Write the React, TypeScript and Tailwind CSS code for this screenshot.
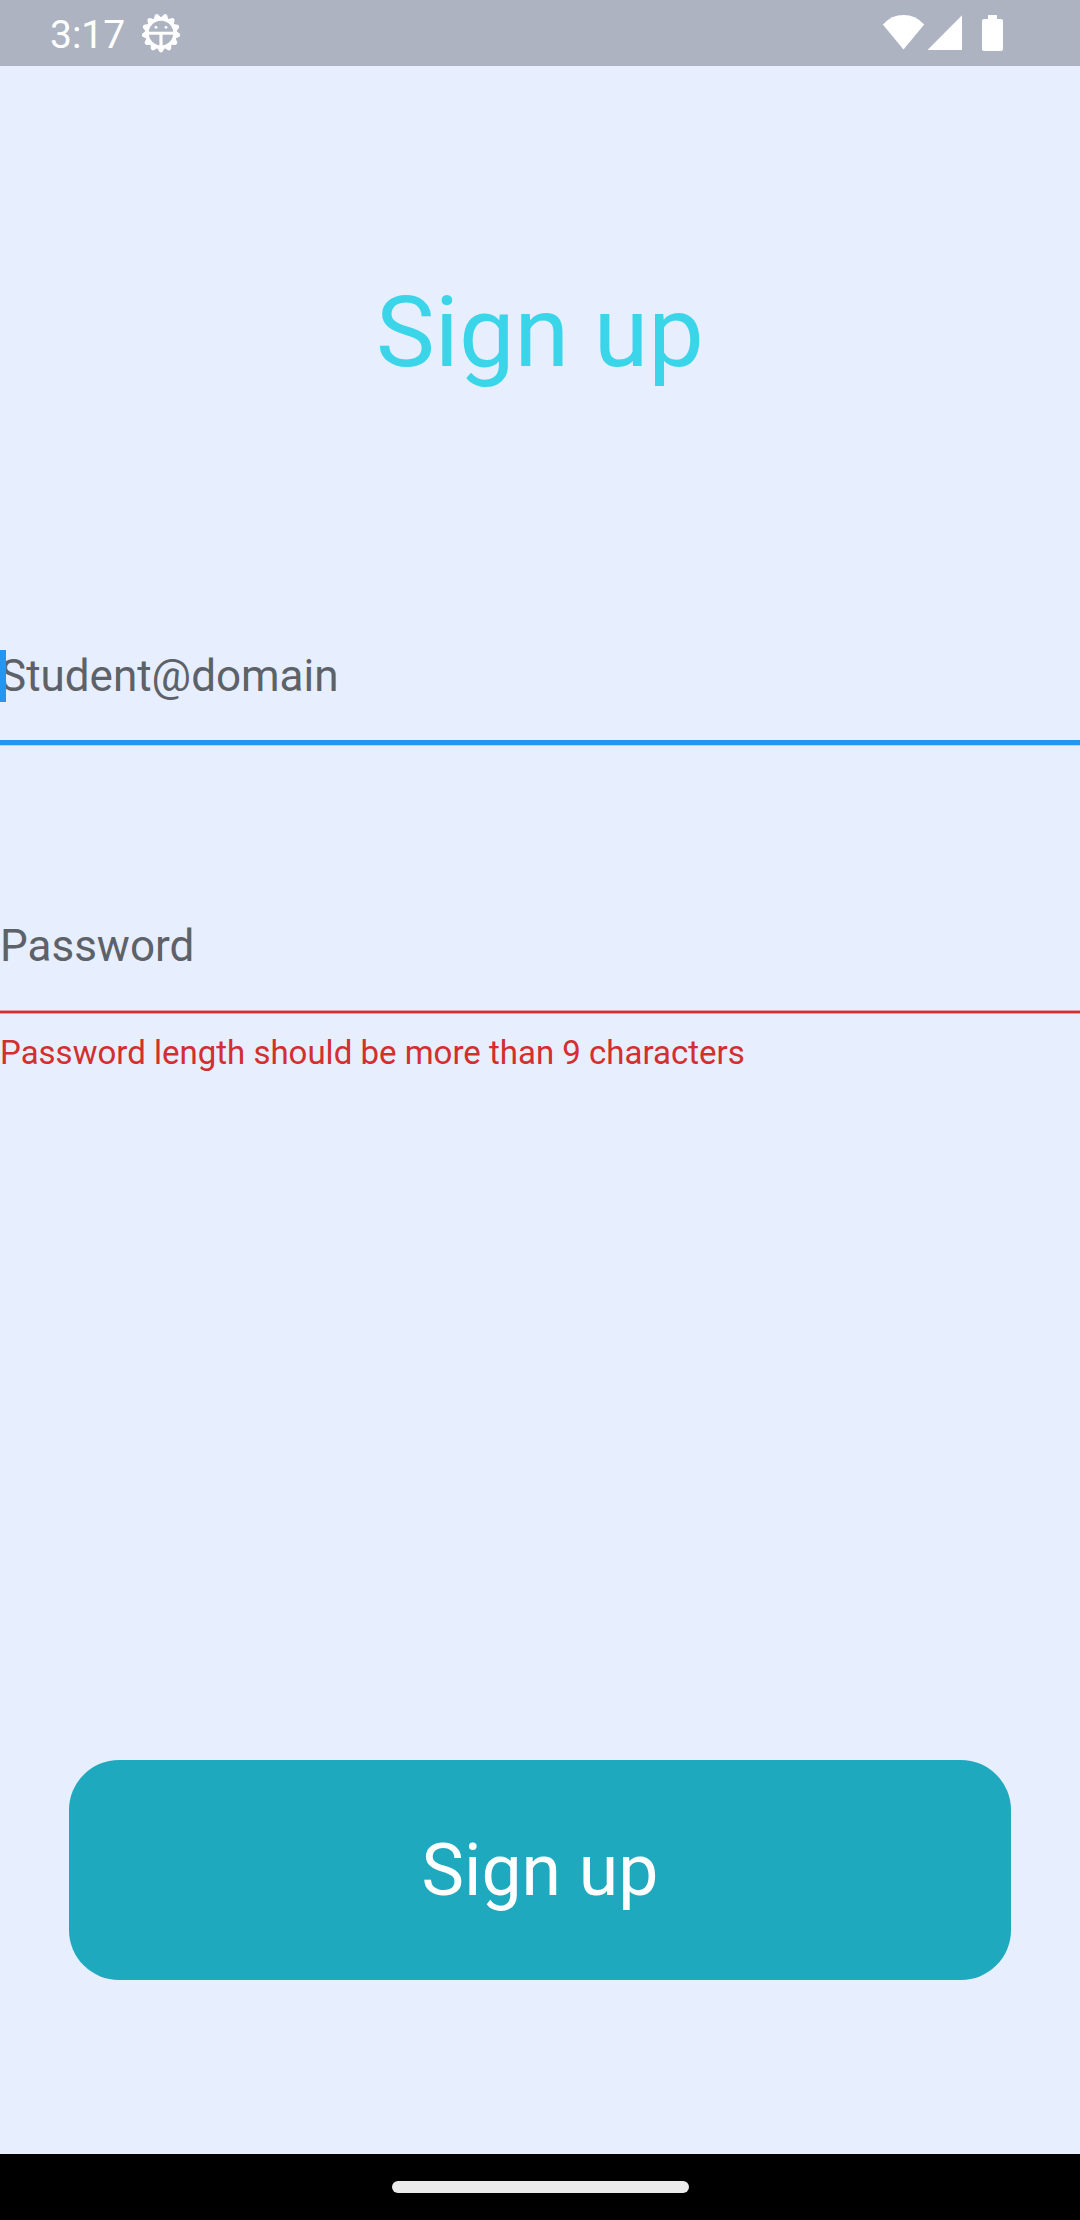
const TOOTH_ANGLES = Array.from({ length: 13 }, (_, i) => 180 + (i * 360) / 13);

function GearFace() {
  return (
    <svg className="ml-[16px] mt-[13px] h-10 w-10 shrink-0" viewBox="-20 -20 40 40" fill="none">
      <circle r="14" stroke="#fff" strokeWidth="3.4" />
      {TOOTH_ANGLES.map((angle) => (
        <path
          key={angle}
          d="M-4 -14.8 L-1.6 -18.7 Q0 -20.1 1.6 -18.7 L4 -14.8 Z"
          fill="#fff"
          transform={`rotate(${angle})`}
        />
      ))}
      <path d="M-13 0.2 H13" stroke="#fff" strokeWidth="3" />
      <path d="M0 0 V14" stroke="#fff" strokeWidth="3.2" />
      <circle cx="-5" cy="-5.7" r="1.4" fill="#fff" />
      <circle cx="5" cy="-5.7" r="1.4" fill="#fff" />
    </svg>
  );
}

function StatusIcons() {
  return (
    <svg className="mr-[76px] mt-[14px] h-[38px] w-[122px]" viewBox="0 0 122 38" fill="#fff">
      <path d="M0.8 10.4 Q9.5 1 21.5 1 Q33.5 1 42.2 10.4 L21.5 35.5 Z" />
      <path d="M45.5 36 L80 1.2 V36 Z" />
      <path d="M106 1 H115 V5 H119 Q121 5 121 7 V35 Q121 37 119 37 H102 Q100 37 100 35 V7 Q100 5 102 5 H106 Z" />
    </svg>
  );
}

export default function App() {
  return (
    <div className="flex h-[2220px] w-[1080px] flex-col overflow-hidden bg-[#e7eefe] font-['Roboto',sans-serif]">
      <header className="flex h-[66px] shrink-0 bg-[#adb3c0] text-white">
        <span className="ml-[50px] mt-[12px] text-[39px] leading-[46px]">3:17</span>
        <GearFace />
        <div className="flex-1" />
        <StatusIcons />
      </header>

      <main className="flex flex-1 flex-col">
        <h1 className="mt-[208px] text-center text-[99px] leading-[116px] text-[#3ad5e9]">Sign up</h1>

        <div className="relative mt-[260px] h-[95px] border-b-[5px] border-[#2196f3] shadow-[0_1px_0_#b5d8fc]">
          <p className="text-[44px] leading-[52px] text-[#5d6168]">Student@domain</p>
          <span className="absolute left-0 top-0 h-[52px] w-[5.5px] bg-[#2196f3]" />
        </div>

        <div className="mt-[175px] h-[93px] border-b-2 border-[#d32f2f] shadow-[0_1px_0_#e19ba5,inset_0_-1px_0_#e19ba5]">
          <p className="text-[44px] leading-[52px] text-[#5d6168]">Password</p>
        </div>
        <p className="mt-[21px] text-[33px] leading-[38px] text-[#d32f2f]">
          Password length should be more than 9 characters
        </p>

        <button className="mx-[69px] mt-[688px] h-[220px] rounded-[50px] bg-[#1fa9be] pt-[2px] text-[71.5px] text-white">
          Sign up
        </button>
      </main>

      <footer className="flex h-[66px] shrink-0 justify-center bg-black pt-[27px]">
        <div className="h-3 w-[297px] rounded-full bg-[#ebebeb]" />
      </footer>
    </div>
  );
}
